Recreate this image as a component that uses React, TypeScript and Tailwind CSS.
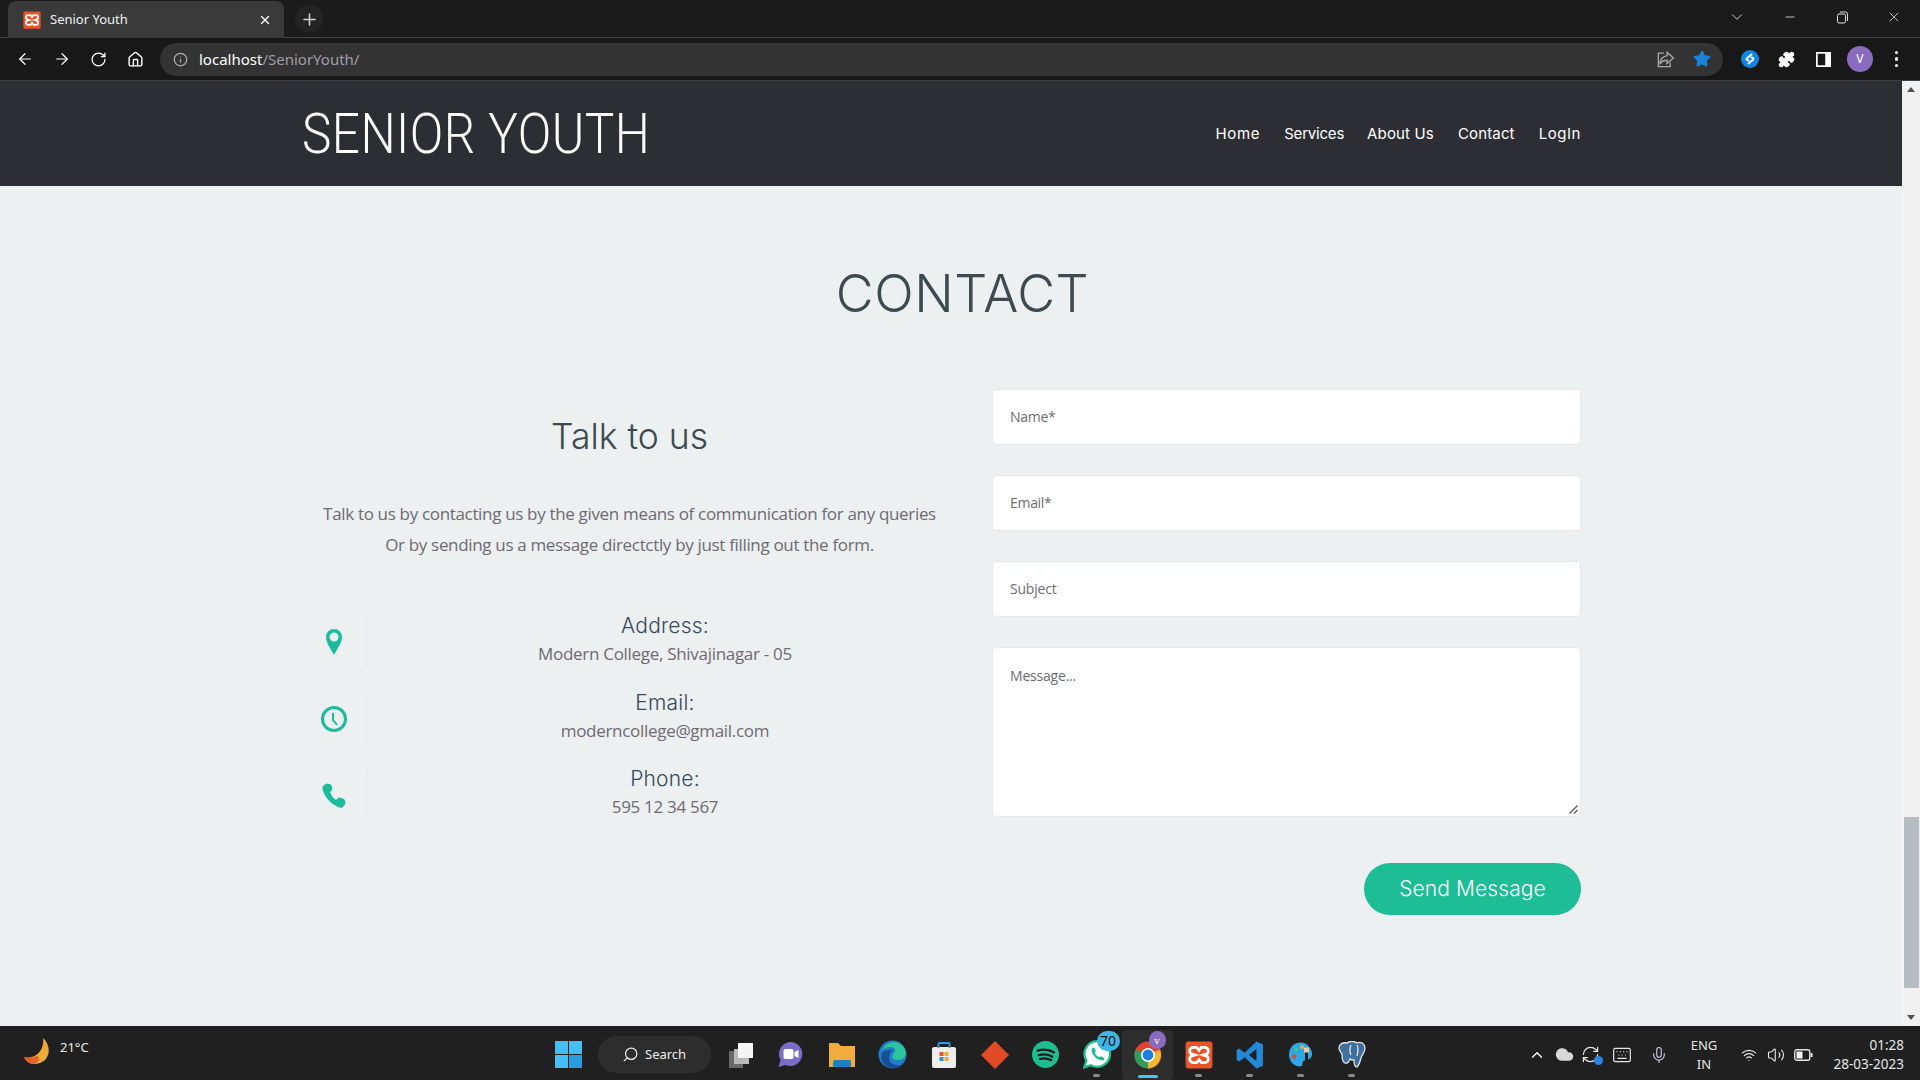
import React from "react";
import { ArrowLeft, ArrowRight, RotateCw, Home, Info, Star, Puzzle, Minus, X, Plus, ChevronDown, ChevronUp, Search, Mic, Wifi, Volume2, Keyboard, Cloud, RefreshCw } from "lucide-react";

const Xampp = ({ s = 18 }: { s?: number }) => (
  <svg width={s} height={s} viewBox="0 0 24 24">
    <rect x="0.5" y="0.5" width="23" height="23" rx="2" fill="#e8552a" />
    <path d="M7 5.500h3l2 2.500 2-2.500h3a2.600 2.600 0 0 1 0 6l-1.500.5 1.500.5a2.600 2.600 0 0 1 0 6h-3l-2-2.500-2 2.500H7a2.600 2.600 0 0 1 0-6l1.500-.5-1.500-.5a2.600 2.600 0 0 1 0-6z" fill="none" stroke="#fff" strokeWidth="2.400" />
  </svg>
);

function Tabstrip() {
  return (
    <div className="h-[38px] bg-[#1b1b1b] flex items-end pl-[8px] border-b border-[#454849] shrink-0">
      <div className="w-[276px] h-[37px] bg-[#3a3a3a] rounded-t-lg flex items-center pl-[15px] pr-[12px] relative top-[1px]">
        <Xampp />
        <span className="ml-[9px] text-[13px] text-[#f0f0f0] font-['Noto_Sans',sans-serif] flex-1">Senior Youth</span>
        <X size={14} strokeWidth={2.4} className="text-white" />
      </div>
      <div className="w-[28px] h-[28px] ml-[11px] mb-[4px] rounded-full bg-[#242424] flex items-center justify-center">
        <Plus size={19} className="text-[#cfcfcf]" />
      </div>
      <div className="flex-1" />
      <div className="flex h-[34px] items-center text-[#e0e0e0] self-start">
        <ChevronDown size={18} strokeWidth={1.2} className="mr-[37px]" />
        <Minus size={14} strokeWidth={1.4} className="mr-[39px]" />
        <svg width="13" height="13" viewBox="0 0 13 13" fill="none" stroke="currentColor" className="mr-[37px]"><rect x="1.5" y="3" width="8" height="9" rx="1.5" /><path d="M4 1h5.5a2 2 0 0 1 2 2v7" /></svg>
        <X size={16} strokeWidth={1.2} className="mr-[18px]" />
      </div>
    </div>
  );
}

function Toolbar() {
  return (
    <div className="h-[43px] bg-[#181818] border-b border-[#3f4244] flex items-center text-white shrink-0">
      <div className="w-[160px] flex items-center pl-[16px] shrink-0">
        <ArrowLeft size={18} strokeWidth={1.6} />
        <ArrowRight size={18} strokeWidth={1.6} className="ml-[19px]" />
        <RotateCw size={17} strokeWidth={1.8} className="ml-[19px]" />
        <Home size={17} strokeWidth={2} className="ml-[20px]" />
      </div>
      <div className="w-[1563px] h-[33px] rounded-full bg-[#333333] flex items-center pl-[13px] pr-[12px] shrink-0">
        <Info size={15} className="text-[#b5b0b0]" />
        <span className="ml-[11px] text-[15px] font-['Noto_Sans',sans-serif] text-white">localhost<span className="text-[#a09ca8]">/SeniorYouth/</span></span>
        <div className="flex-1" />
        <svg width="19" height="19" viewBox="0 0 24 24" fill="none" stroke="#a8a8a8" strokeWidth="1.7" className="mr-[18px]"><path d="M10 4H3v17h15v-5" /><path d="M14 3l8 7-8 7v-4c-4 0-7 1-9 5 0-6 4-10 9-11z" /></svg>
        <Star size={18} fill="#1a83d8" stroke="#1a83d8" />
      </div>
      <div className="flex items-center flex-1 pl-[9px]">
        <div className="w-[36.500px] flex justify-center">
          <svg width="18" height="18" viewBox="0 0 24 24"><circle cx="12" cy="12" r="12" fill="#0f86e0" /><path d="M14 6l-6 5c-1.500 1.500 0 3 2 3M10 18l6-5c1.500-1.500 0-3-2-3" fill="none" stroke="#fff" strokeWidth="2.600" strokeLinecap="round" /></svg>
        </div>
        <div className="w-[36.500px] flex justify-center"><Puzzle size={17} fill="#fff" stroke="#fff" /></div>
        <div className="w-[36.500px] flex justify-center">
          <svg width="15" height="15" viewBox="0 0 13 13"><rect x="0.750" y="0.750" width="11.500" height="11.500" fill="none" stroke="#fff" strokeWidth="1.500" /><rect x="8" y="1" width="4" height="11" fill="#fff" /></svg>
        </div>
        <div className="w-[36.500px] flex justify-center">
          <div className="w-[26px] h-[26px] rounded-full bg-[#8a6bbf] text-white text-[12px] flex items-center justify-center font-['Noto_Sans',sans-serif]">V</div>
        </div>
        <div className="w-[36.500px] flex flex-col items-center gap-[3px]">
          <span className="w-[3.500px] h-[3.500px] rounded-full bg-white" />
          <span className="w-[3.500px] h-[3.500px] rounded-full bg-white" />
          <span className="w-[3.500px] h-[3.500px] rounded-full bg-white" />
        </div>
      </div>
    </div>
  );
}

function SiteHeader() {
  return (
    <header className="h-[105px] bg-[#2d2e33] flex items-center justify-between pl-[302px] pr-[321px] shrink-0">
      <div className="text-white text-[56px] font-light leading-none font-['Roboto',sans-serif] tracking-[0.5px] scale-x-[0.885] origin-left">SENIOR YOUTH</div>
      <nav className="flex text-white text-[15px] font-['Inter',sans-serif] font-normal relative top-[1px]">
        <span className="mr-[24px] tracking-[0.65px]">Home</span>
        <span className="mr-[23px] tracking-[-0.2px]">Services</span>
        <span className="mr-[24px] tracking-[0.15px]">About Us</span>
        <span className="mr-[24px] tracking-[0.15px]">Contact</span>
        <span className="tracking-[0.55px]">LogIn</span>
      </nav>
    </header>
  );
}

const Pin = () => (
  <svg width="18" height="26" viewBox="0 0 18 26"><path fillRule="evenodd" d="M9 0a8 8 0 0 1 8 8c0 6-5 12-8 18C6 20 1 14 1 8a8 8 0 0 1 8-8zm0 3.500a4.500 4.500 0 1 0 0 9 4.500 4.500 0 0 0 0-9z" fill="#1abc9c" /></svg>
);
const Clock = () => (
  <svg width="26" height="26" viewBox="0 0 26 26" fill="none" stroke="#1abc9c"><circle cx="13" cy="13" r="11.500" strokeWidth="3" /><path d="M12 7v7l4 5" strokeWidth="2" /></svg>
);
const Phone = () => (
  <svg width="24" height="25" viewBox="0 0 24 25"><path d="M5 0.500 9 1.500c1 2 1.500 4 1 6L8 9c1 3 3 6 6 8l2-2c2-.5 4 0 6.500 1.500 1 1 1 3 .5 5l-2.500 3c-2 .5-5-.5-8-2.500C6 18 2 12 0.500 6 0 5 1 3 2 2z" fill="#1abc9c" /></svg>
);

function InfoRow({ icon, title, text, h }: { icon: React.ReactNode; title: string; text: string; h: string }) {
  return (
    <div className={`flex ${h}`}>
      <div className="w-[65px] flex items-center justify-center pr-[1px] border-r border-[#e6e9eb] shrink-0">{icon}</div>
      <div className="flex-1 flex flex-col items-center -mt-[4px] pr-[1px]">
        <div className="text-[21px] leading-[28px] text-[#34495e] font-['Inter',sans-serif] font-light tracking-[0.2px]">{title}</div>
        <div className="text-[17px] leading-[27px] text-[#6f6a72] font-['Open_Sans',sans-serif] tracking-[-0.3px]">{text}</div>
      </div>
    </div>
  );
}

function Contact() {
  return (
    <main className="flex-1 bg-[#ecf0f1] flex flex-col overflow-hidden">
      <h1 className="text-[52px] leading-[64px] text-[#3d4a4f] text-center font-['Inter',sans-serif] font-light mt-[76px] mb-[64px] pl-[23px] tracking-[0.5px]">CONTACT</h1>
      <div className="flex pl-[302px] pr-[320px]">
        <div className="w-[655px] shrink-0">
          <h2 className="text-[35.500px] leading-[44px] text-[#3d4a4f] font-['Inter',sans-serif] font-light text-center mt-[25px] mb-[39px]">Talk to us</h2>
          <div className="text-[17px] leading-[31px] text-[#6f6a72] font-['Open_Sans',sans-serif] text-center tracking-[-0.33px] mb-[56px]">
            <p>Talk to us by contacting us by the given means of communication for any queries</p>
            <p>Or by sending us a message directctly by just filling out the form.</p>
          </div>
          <div className="flex flex-col gap-[25px] w-[662px]">
            <InfoRow icon={<Pin />} title="Address:" text="Modern College, Shivajinagar - 05" h="h-[52px]" />
            <InfoRow icon={<Clock />} title="Email:" text="moderncollege@gmail.com" h="h-[51px]" />
            <InfoRow icon={<Phone />} title="Phone:" text="595 12 34 567" h="h-[52px]" />
          </div>
        </div>
        <div className="flex-1 flex flex-col items-end pl-[35px]">
          <form className="w-full flex flex-col gap-[30px] pr-[1px] -mt-[1px]">
            <div className="h-[56px] pb-[2px] bg-white rounded-[4px] border border-[#e6e9eb] px-[17px] flex items-center text-[14px] text-[#6f6a72] font-['Open_Sans',sans-serif] tracking-[-0.3px]">Name*</div>
            <div className="h-[56px] pb-[2px] bg-white rounded-[4px] border border-[#e6e9eb] px-[17px] flex items-center text-[14px] text-[#6f6a72] font-['Open_Sans',sans-serif] tracking-[-0.3px]">Email*</div>
            <div className="h-[56px] pb-[2px] bg-white rounded-[4px] border border-[#e6e9eb] px-[17px] flex items-center text-[14px] text-[#6f6a72] font-['Open_Sans',sans-serif] tracking-[-0.2px]">Subject</div>
            <div className="h-[170px] bg-white rounded-[4px] border border-[#e6e9eb] px-[17px] pt-[18px] text-[14px] leading-[20px] text-[#6f6a72] font-['Open_Sans',sans-serif] tracking-[-0.2px] relative">
              Message...
              <svg width="9" height="9" viewBox="0 0 9 9" className="absolute right-[2px] bottom-[2px]" stroke="#555" strokeWidth="1.200"><path d="M0.500 8.500 8.500 0.500M5 8.500 8.500 5" /></svg>
            </div>
          </form>
          <button className="mt-[46px] mr-[1px] w-[217px] h-[52px] rounded-full bg-[#1dbd96] text-white text-[21px] font-['Inter',sans-serif] font-light tracking-[0.1px]">Send Message</button>
        </div>
      </div>
    </main>
  );
}

function Scrollbar() {
  return (
    <div className="w-[18px] bg-[#f1f1f1] flex flex-col items-center shrink-0">
      <div className="h-[17px] flex items-center justify-center"><span className="w-0 h-0 border-x-[4px] border-x-transparent border-b-[5px] border-b-[#505050]" /></div>
      <div className="flex-1 flex flex-col justify-end w-full">
        <div className="h-[171px] w-[15px] mx-auto bg-[#b7bcc0]" />
      </div>
      <div className="h-[38px] flex items-center justify-center pt-[20px]"><span className="w-0 h-0 border-x-[4px] border-x-transparent border-t-[5px] border-t-[#505050]" /></div>
    </div>
  );
}

const Cell = ({ children, dot, active }: { children: React.ReactNode; dot?: boolean; active?: boolean }) => (
  <div className={`w-[51px] h-[50px] flex items-center justify-center relative shrink-0 rounded-[4px] ${active ? "bg-[#2c2d2c]" : ""}`}>
    {children}
    {dot && !active && <span className="absolute bottom-[3px] left-[22px] w-[7px] h-[3px] rounded-full bg-[#8a8a8a]" />}
    {active && <span className="absolute bottom-[2px] left-[16px] w-[20px] h-[3px] rounded-full bg-[#4cc2ff]" />}
  </div>
);

function TaskIcons() {
  return (
    <div className="flex items-center">
      <Cell>
        <svg width="27" height="27" viewBox="0 0 26 27"><path d="M13 1a12 12 0 1 1-5 23l-7 2 2-7A12 12 0 0 1 13 1z" fill="#7b6cc9" /><rect x="6" y="8" width="10" height="10" rx="2" fill="#fff" /><path d="M17 11l4-2v8l-4-2z" fill="#fff" /></svg>
      </Cell>
      <Cell>
        <svg width="28" height="26" viewBox="0 0 26 26"><path d="M0 1h9l3 3h14v21H0z" fill="#f0ac3c" /><rect x="4" y="18" width="18" height="7" rx="1.500" fill="#1d7fc4" /></svg>
      </Cell>
      <Cell>
        <svg width="29" height="29" viewBox="0 0 26 26"><circle cx="13" cy="13" r="12.500" fill="#1f7fc9" /><path d="M4 9C7 0 22-1 25 11c.5 4-3 7-7 7-4 0-6-2-5-4 1-3 3-3 2-6-2-3-8-2-11 1z" fill="#2dc59a" /><path d="M3 13c-1 7 5 13 12 12 3 0 5-1 7-3-6 2-13-1-12-7 0-3 2-5 4-6-5 0-10 0-11 4z" fill="#174f96" /></svg>
      </Cell>
      <Cell>
        <svg width="28" height="28" viewBox="0 0 25 28"><rect x="0.500" y="6" width="24" height="21" rx="2" fill="#ededed" /><path d="M7 7V3a1 1 0 0 1 1-1h9a1 1 0 0 1 1 1v4" fill="none" stroke="#2b9fe0" strokeWidth="1.800" /><rect x="8" y="11" width="4" height="4" fill="#e25a2b" /><rect x="13" y="11" width="4" height="4" fill="#f0ac3c" /><rect x="8" y="16" width="4" height="4" fill="#2b8fe0" /><rect x="13" y="16" width="4" height="4" fill="#f0ac3c" /></svg>
      </Cell>
      <Cell>
        <svg width="28" height="28" viewBox="0 0 26 26"><path d="M13 0 26 13 13 26 0 13z" fill="#e04a26" /></svg>
      </Cell>
      <Cell>
        <svg width="27" height="27" viewBox="0 0 24 24"><circle cx="12" cy="12" r="12" fill="#1dbd8f" /><path d="M5 8.500c5-1.500 10-1 14.500 1.500M6 12.500c4-1 9-.5 12 1.500M7 16c3-1 7-.5 10 1" fill="none" stroke="#1c1c1c" strokeWidth="2" strokeLinecap="round" /></svg>
      </Cell>
      <Cell dot>
        <div className="relative">
          <svg width="28" height="29" viewBox="0 0 25 26"><path d="M12.500 1a11.500 11.500 0 1 1-5.500 21.500L1 24.500l2-6A11.500 11.500 0 0 1 12.500 1z" fill="#fff" stroke="#1dbd8f" strokeWidth="2" /><path d="M8 7l2 0 1.500 3-1 1.500c1 2 2 3 4 4l1.500-1 3 1.500v2c-5 2-13-5-11-10.500z" fill="#1dbd8f" /></svg>
          <span className="absolute -top-[9px] left-[14px] w-[23px] h-[20px] rounded-full bg-[#3db7ea] text-[#101010] text-[14px] leading-[20px] text-center font-['Noto_Sans',sans-serif]">70</span>
        </div>
      </Cell>
      <Cell active>
        <div className="relative">
          <svg width="28" height="28" viewBox="0 0 26 26"><circle cx="13" cy="13" r="12.500" fill="#e0432f" /><path d="M13 13 24 8a12.500 12.500 0 0 1-11 17.500z" fill="#f0b72f" /><path d="M13 13 13 25.500A12.500 12.500 0 0 1 1.500 8z" fill="#2f9e5c" /><circle cx="13" cy="13" r="6.500" fill="#fff" /><circle cx="13" cy="13" r="5" fill="#1a7fe0" /></svg>
          <span className="absolute -top-[10px] left-[15px] w-[17px] h-[18px] rounded-full bg-[#8a6bbf] text-white text-[11px] leading-[18px] text-center font-['Liberation_Serif',serif]">v</span>
        </div>
      </Cell>
      <Cell dot><Xampp s={28} /></Cell>
      <Cell dot>
        <svg width="28" height="28" viewBox="0 0 26 26"><path d="M19 0.500 25 3v20l-6 2.500L8 15l-5 4-2.500-1.500V8.500L3 7l5 4z" fill="#2488d8" /><path d="M19 7.500 12 13l7 5.500z" fill="#1e1e1e" /></svg>
      </Cell>
      <Cell dot>
        <svg width="26" height="27" viewBox="0 0 26 26"><path d="M13 1C5 1 1 7 1 13c0 7 5 12 11 12 3 0 2-3 3-5s8-1 9-6-4-13-11-13z" fill="#2fa6e8" /><circle cx="8" cy="8" r="2" fill="#3cc48a" /><circle cx="14" cy="5.500" r="2" fill="#f0ac3c" /><circle cx="6" cy="15" r="2.200" fill="#e04a26" /><rect x="17" y="9" width="3" height="16" fill="#222" /><rect x="16" y="6" width="5" height="5" fill="#f2c9a0" /></svg>
      </Cell>
      <Cell dot>
        <svg width="28" height="28" viewBox="0 0 28 28" stroke="#e4e4e4" strokeWidth="1.300" fill="#3f6f9c"><path d="M1 7c0-4 4-6 8-5 3-2 7-2 10 0 4-2 8 1 8 5 0 5-3 6-4 10-1 4-2 7-4 9-2 0-3-3-3-7-2 0-3 0-4-1-1 3-3 5-5 4-3-1-3-6-3-9C3 11 1 10 1 7z" /><path d="M13 4c-2 3-1 8 0 10M19 4c2 3 1 7 0 11" fill="none" /></svg>
      </Cell>
    </div>
  );
}

function Taskbar() {
  return (
    <div className="h-[54px] bg-[#1f201f] flex items-center relative shrink-0 pt-[3px]">
      <div className="flex items-center w-[555px] pl-[24px] shrink-0">
        <svg width="27" height="26" viewBox="0 0 27 26" className="-mt-[8px]"><path d="M19 0c10 9 7 26-9 26-5 0-8-3-10-7 9 3 21-5 19-19z" fill="#efa935" /><path d="M0 19c4 1 9 1 13-1 3 1 3 6-3 8-5 0-8-3-10-7z" fill="#e4612a" /></svg>
        <span className="ml-[9px] text-[13px] text-[#ececec] font-['Noto_Sans',sans-serif] -mt-[14px]">21°C</span>
      </div>
      <svg width="27" height="27" viewBox="0 0 27 27" className="shrink-0"><rect x="0" y="0" width="13" height="13" fill="#45bdf5" /><rect x="14" y="0" width="13" height="13" fill="#45bdf5" /><rect x="0" y="14" width="13" height="13" fill="#45bdf5" /><rect x="14" y="14" width="13" height="13" fill="#2b9be0" /></svg>
      <div className="ml-[16px] w-[113px] h-[37px] rounded-full bg-[#2c2d2c] flex items-center pl-[24px] text-[#ececec] shrink-0">
        <Search size={17} strokeWidth={1.7} className="-scale-x-100" />
        <span className="ml-[6px] text-[13px] font-['Noto_Sans',sans-serif]">Search</span>
      </div>
      <div className="w-[56px] flex justify-center shrink-0 relative left-[3px]">
        <svg width="30" height="26" viewBox="0 0 30 26"><rect x="2" y="9" width="14" height="17" fill="#6a6a6a" /><rect x="7" y="7" width="15" height="15" fill="#b9b9b9" /><rect x="11" y="1" width="15" height="15" fill="#f5f5f5" /></svg>
      </div>
      <div className="relative -left-[2px]"><TaskIcons /></div>
      <div className="flex-1" />
      <div className="flex items-center text-[#e6e6e6] pr-[16px] shrink-0">
        <ChevronUp size={18} strokeWidth={1.700} className="text-white" />
        <Cloud size={19} fill="#d8d8d8" stroke="#d8d8d8" className="ml-[9px]" />
        <div className="ml-[7px] relative">
          <RefreshCw size={19} strokeWidth={1.500} />
          <span className="absolute right-[-3px] bottom-[-1px] w-[9px] h-[9px] rounded-full bg-[#2a86dc]" />
        </div>
        <Keyboard size={20} strokeWidth={1.400} className="ml-[12px]" />
        <Mic size={18} strokeWidth={1.500} className="ml-[18px] text-[#cfc7e6]" />
        <div className="ml-[14px] w-[44px] text-center text-[13px] leading-[19px] font-['Noto_Sans',sans-serif]">ENG<br />IN</div>
        <Wifi size={16} strokeWidth={1.800} className="ml-[15px]" />
        <Volume2 size={18} strokeWidth={1.500} className="ml-[10px]" />
        <svg width="19" height="12" viewBox="0 0 19 12" fill="none" className="ml-[9px]"><rect x="0.750" y="0.750" width="15" height="10.500" rx="2" stroke="#e6e6e6" strokeWidth="1.300" /><rect x="2.500" y="2.500" width="6" height="7" fill="#f4f4f4" /><rect x="16.500" y="4" width="2" height="4" fill="#e6e6e6" /></svg>
        <div className="ml-[20px] w-[71px] text-right text-[13.500px] leading-[19px] font-['Noto_Sans',sans-serif]">01:28<br />28-03-2023</div>
      </div>
    </div>
  );
}

export default function App() {
  return (
    <div className="w-[1920px] h-[1080px] flex flex-col overflow-hidden bg-[#ecf0f1]">
      <Tabstrip />
      <Toolbar />
      <div className="flex-1 flex min-h-0">
        <div className="flex-1 flex flex-col min-w-0">
          <SiteHeader />
          <Contact />
        </div>
        <Scrollbar />
      </div>
      <Taskbar />
    </div>
  );
}
